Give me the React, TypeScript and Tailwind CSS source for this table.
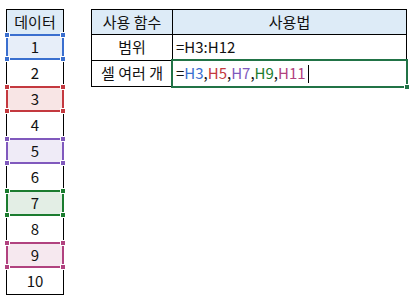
import React from "react";

const font = { fontFamily: '"Noto Sans CJK KR", "Noto Sans", sans-serif' };

type Sel = { border: string; bg: string; handle: string };

const sels: Record<number, Sel> = {
  1: { border: "border-[#3a6fcf]", bg: "bg-[#e7eef9]", handle: "bg-[#3a6fcf]" },
  3: { border: "border-[#c4393f]", bg: "bg-[#f8e5e5]", handle: "bg-[#c4393f]" },
  5: { border: "border-[#8059bd]", bg: "bg-[#efebf7]", handle: "bg-[#8059bd]" },
  7: { border: "border-[#1b7c2f]", bg: "bg-[#e3eee5]", handle: "bg-[#1b7c2f]" },
  9: { border: "border-[#b1427f]", bg: "bg-[#f6e8ef]", handle: "bg-[#b1427f]" },
};

function Handle({ cls, pos }: { cls: string; pos: string }) {
  return <div className={`absolute w-[6px] h-[6px] border border-white ${cls} ${pos}`} />;
}

function LeftCell({ n }: { n: number }) {
  const s = sels[n];
  if (s) {
    return (
      <div
        className={`relative h-[26px] border-2 ${s.border} ${s.bg} flex items-center justify-center text-[15px] text-[#111]`}
      >
        {n}
        <Handle cls={s.handle} pos="-left-[4px] -top-[4px]" />
        <Handle cls={s.handle} pos="-right-[4px] -top-[4px]" />
        <Handle cls={s.handle} pos="-left-[4px] -bottom-[4px]" />
        <Handle cls={s.handle} pos="-right-[4px] -bottom-[4px]" />
      </div>
    );
  }
  return (
    <div className="h-[26px] border-x border-black flex items-center justify-center text-[15px] text-[#111]">
      {n}
    </div>
  );
}

export default function App() {
  return (
    <div className="w-[415px] h-[307px] bg-white relative" style={font}>
      <div className="flex items-start pt-[9px] pl-[6px]">
        {/* Left data column */}
        <div className="w-[58px] flex flex-col border-b border-black">
          <div className="h-[25px] border-x border-t border-black bg-[#ddebf7] flex items-center justify-center text-[15px] text-[#111]">
            데이터
          </div>
          {[1, 2, 3, 4, 5, 6, 7, 8, 9, 10].map((n) => (
            <LeftCell key={n} n={n} />
          ))}
        </div>

        {/* Right table */}
        <div className="ml-[27px] w-[316px] border border-black text-[15px] text-[#111]">
          <div className="flex h-[25px] bg-[#ddebf7] border-b border-black">
            <div className="w-[81px] border-r border-black flex items-center justify-center">사용 함수</div>
            <div className="flex-1 flex items-center justify-center">사용법</div>
          </div>
          <div className="flex h-[26px] border-b border-black">
            <div className="w-[81px] border-r border-black flex items-center justify-center">범위</div>
            <div className="flex-1 flex items-center pl-[3px]">=H3:H12</div>
          </div>
          <div className="flex h-[25px]">
            <div className="w-[81px] border-r border-black flex items-center justify-center">셀 여러 개</div>
            <div className="flex-1 relative flex items-center pl-[3px]">
              <span>=</span>
              <span className="text-[#3a6fcf]">H3</span>
              <span>,</span>
              <span className="text-[#c4393f]">H5</span>
              <span>,</span>
              <span className="text-[#8059bd]">H7</span>
              <span>,</span>
              <span className="text-[#1b7c2f]">H9</span>
              <span>,</span>
              <span className="text-[#b1427f]">H11</span>
              <span className="ml-[2px] inline-block w-[1px] h-[18px] bg-black" />
              <div className="absolute -left-[2px] -top-[2px] -right-[2px] -bottom-[2px] border-2 border-[#217346]" />
              <div className="absolute -right-[4px] -bottom-[4px] w-[6px] h-[6px] bg-[#217346] border border-white" />
            </div>
          </div>
        </div>
      </div>
    </div>
  );
}
